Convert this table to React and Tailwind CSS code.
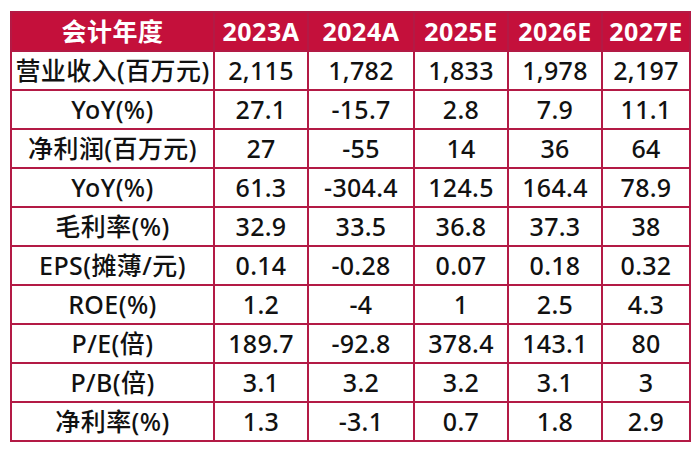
import React from "react";

const header = ["会计年度", "2023A", "2024A", "2025E", "2026E", "2027E"];
const rows = [
  ["营业收入(百万元)", "2,115", "1,782", "1,833", "1,978", "2,197"],
  ["YoY(%)", "27.1", "-15.7", "2.8", "7.9", "11.1"],
  ["净利润(百万元)", "27", "-55", "14", "36", "64"],
  ["YoY(%)", "61.3", "-304.4", "124.5", "164.4", "78.9"],
  ["毛利率(%)", "32.9", "33.5", "36.8", "37.3", "38"],
  ["EPS(摊薄/元)", "0.14", "-0.28", "0.07", "0.18", "0.32"],
  ["ROE(%)", "1.2", "-4", "1", "2.5", "4.3"],
  ["P/E(倍)", "189.7", "-92.8", "378.4", "143.1", "80"],
  ["P/B(倍)", "3.1", "3.2", "3.2", "3.1", "3"],
  ["净利率(%)", "1.3", "-3.1", "0.7", "1.8", "2.9"],
];

export default function App() {
  return (
    <div
      className="w-[700px] h-[450px] bg-white pt-[11px] pl-[10px]"
      style={{ fontFamily: '"Noto Sans", "Noto Sans CJK SC", sans-serif' }}
    >
      <table className="border-collapse table-fixed w-[679px]">
        <colgroup>
          <col className="w-[203px]" />
          <col className="w-[94px]" />
          <col className="w-[106px]" />
          <col className="w-[94px]" />
          <col className="w-[94px]" />
          <col className="w-[88px]" />
        </colgroup>
        <thead>
          <tr className="h-[39px] bg-[#c4103b]">
            {header.map((h, i) => (
              <th
                key={i}
                className="border-2 border-[#b31a45] text-white font-bold text-[25px] tracking-[0.5px] leading-none text-center p-0 whitespace-nowrap"
              >
                {h}
              </th>
            ))}
          </tr>
        </thead>
        <tbody>
          {rows.map((r, ri) => (
            <tr key={ri} className="h-[39px]">
              {r.map((c, ci) => (
                <td
                  key={ci}
                  className={
                    "border-2 border-[#b31a45] text-[#111] font-medium text-[25px] leading-none text-center p-0 whitespace-nowrap " +
                    (ci === 0 ? "tracking-[0.4px]" : "tracking-[0.3px]")
                  }
                >
                  {c}
                </td>
              ))}
            </tr>
          ))}
        </tbody>
      </table>
    </div>
  );
}
